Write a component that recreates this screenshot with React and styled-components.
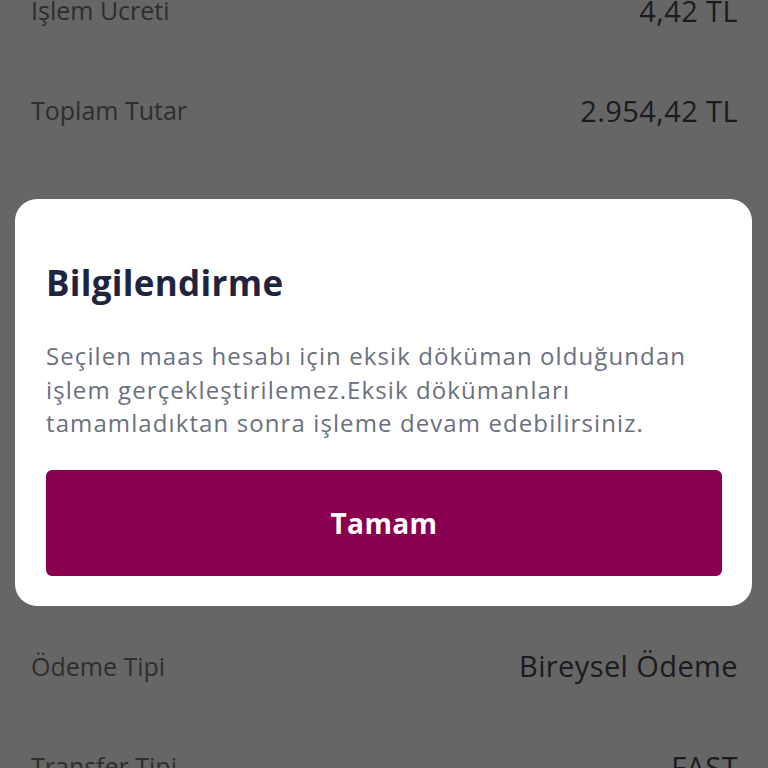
import React from "react";
import styled, { createGlobalStyle } from "styled-components";

const GlobalStyle = createGlobalStyle`
  html, body {
    margin: 0;
    padding: 0;
    background: #ffffff;
    font-family: "Open Sans", "Noto Sans", sans-serif;
  }
  #root {
    height: 768px;
    overflow: hidden;
  }
`;

const Page = styled.div`
  position: relative;
  height: 768px;
  overflow: hidden;
  background: #ffffff;
`;

const List = styled.div`
  display: flex;
  flex-direction: column;
  margin-top: -40px;
`;

const Row = styled.div`
  display: flex;
  align-items: center;
  justify-content: space-between;
  height: 100px;
  padding: 0 30px 0 31px;
  box-sizing: border-box;
  border-bottom: ${(p) => (p.$divider ? "1px solid #f4f4f4" : "none")};
`;

const Label = styled.span`
  font-family: "Open Sans", "Noto Sans", sans-serif;
  font-size: 25px;
  color: #747474;
`;

const Value = styled.span`
  font-family: "Open Sans", "Noto Sans", sans-serif;
  font-size: 29px;
  letter-spacing: 0.4px;
  color: #46464e;
`;

const Section = styled.div`
  height: 456px;
`;

const Overlay = styled.div`
  position: absolute;
  inset: 0;
  background: rgba(0, 0, 0, 0.6);
  display: flex;
  align-items: flex-start;
  padding: 199px 16px 0 15px;
`;

const Dialog = styled.div`
  flex: 1;
  background: #ffffff;
  border-radius: 22px;
  padding: 61px 30px 30px 31px;
  display: flex;
  flex-direction: column;
`;

const Title = styled.h2`
  margin: 0;
  font-family: "Open Sans", "Noto Sans", sans-serif;
  font-weight: 700;
  font-size: 35px;
  line-height: 46px;
  letter-spacing: 0.3px;
  color: #1f2440;
`;

const Message = styled.p`
  margin: 33px 0 0;
  font-family: "Open Sans", "Noto Sans", sans-serif;
  font-size: 24px;
  line-height: 33.5px;
  letter-spacing: 1.1px;
  color: #6b7080;
`;

const Button = styled.button`
  margin-top: 30px;
  height: 106px;
  border: none;
  border-radius: 6px;
  background: #8a0050;
  color: #ffffff;
  font-family: "Open Sans", "Noto Sans", sans-serif;
  font-weight: 700;
  font-size: 28px;
  letter-spacing: 0.4px;
  cursor: pointer;
`;

const rows = [
  { label: "İşlem Ücreti", value: "4,42 TL" },
  { label: "Toplam Tutar", value: "2.954,42 TL" },
];

const App = () => {
  return (
    <>
      <GlobalStyle />
      <Page>
        <List>
          {rows.map((r) => (
            <Row key={r.label}>
              <Label>{r.label}</Label>
              <Value>{r.value}</Value>
            </Row>
          ))}
          <Section />
          <Row $divider>
            <Label>Ödeme Tipi</Label>
            <Value>Bireysel Ödeme</Value>
          </Row>
          <Row>
            <Label>Transfer Tipi</Label>
            <Value>FAST</Value>
          </Row>
        </List>
        <Overlay>
          <Dialog>
            <Title>Bilgilendirme</Title>
            <Message>
              Seçilen maas hesabı için eksik döküman olduğundan
              <br />
              işlem gerçekleştirilemez.Eksik dökümanları
              <br />
              tamamladıktan sonra işleme devam edebilirsiniz.
            </Message>
            <Button>Tamam</Button>
          </Dialog>
        </Overlay>
      </Page>
    </>
  );
};

export default App;
